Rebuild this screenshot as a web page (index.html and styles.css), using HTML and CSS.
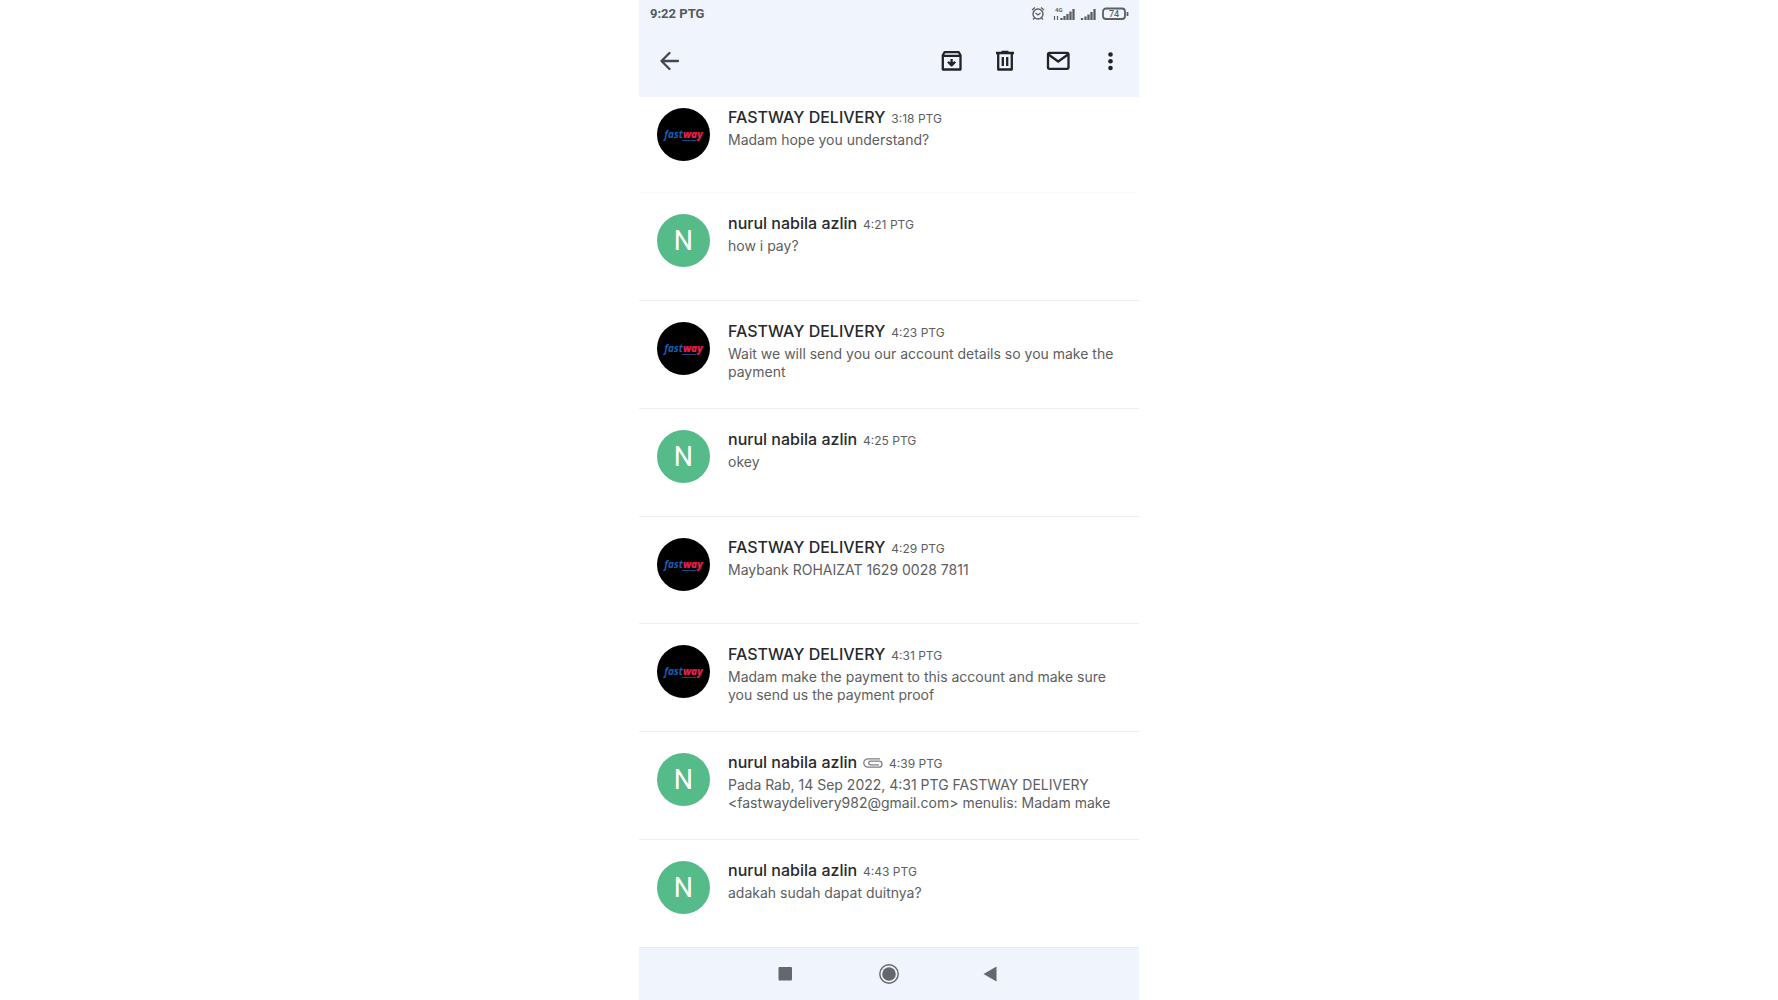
FILE: index.html
```
<!DOCTYPE html>
<html lang="ms">
<head>
<meta charset="utf-8">
<title>FASTWAY DELIVERY</title>
<meta name="viewport" content="width=device-width, initial-scale=1">
<link rel="stylesheet" href="styles.css">
</head>
<body>
<div class="phone">
  <header class="top">
    <div class="status">
      <span class="clock">9:22 PTG</span>
      <svg class="status-icons" viewBox="0 0 98 16" width="98" height="16" fill="none" stroke="#5b5f64" aria-hidden="true">
        <circle cx="7" cy="8" r="5" stroke-width="1.400"/>
        <path d="M1 4L4 1.500M13 4L10 1.500M4.500 7L7 9L9.500 7M3.500 12L2 13.500M10.500 12L12 13.500" stroke-width="1.300"/>
        <text class="tiny" x="24" y="6">4G</text>
        <path d="M23.500 10v4M26.500 10v4" stroke-width="1.200"/>
        <path d="M30.500 12v2M33.500 10v4M36.500 8v6M39.500 5.500v8.500M42.500 3v11M51 12v2M54.500 10.500v3.500M57.500 8.500v5.500M60.500 6v8M63.500 3v11" stroke-width="2.300"/>
        <rect x="72" y="2.500" width="22" height="10.500" rx="3" stroke-width="1.800"/>
        <path d="M96.500 6v4" stroke-width="1.800"/>
        <text class="charge" x="83" y="11">74</text>
      </svg>
    </div>
    <div class="bar">
      <button class="icon" type="button" aria-label="Back">
        <svg viewBox="0 0 24 24" fill="none" stroke="#44474d" stroke-width="2.300" stroke-linecap="round" stroke-linejoin="round"><path d="M20 12H4.500M11.500 4L3.500 12l8 8"/></svg>
      </button>
      <div class="actions">
        <button class="icon" type="button" aria-label="Archive">
          <svg viewBox="0 0 24 24" fill="none" stroke="#202328" stroke-width="2.300" stroke-linejoin="round"><path d="M2.800 6.200L4.500 3.200H18.800L20.500 6.200V20.500H2.800zM2.800 6.800H20.500M11.600 10v6M8 12.800l3.600 3.600L15.200 12.800"/></svg>
        </button>
        <button class="icon" type="button" aria-label="Delete">
          <svg viewBox="0 0 24 24" fill="none" stroke="#202328" stroke-width="2.300" stroke-linejoin="round"><path d="M3 4H21M8.500 3H15.500M5.200 4.500V20.500H18.800V4.500M9.800 8v9M14.200 8v9"/></svg>
        </button>
        <button class="icon" type="button" aria-label="Mark as unread">
          <svg viewBox="0 0 24 24" fill="none" stroke="#202328" stroke-width="2.300"><rect x="2" y="3.800" width="20.500" height="16" rx="1.500"/><path d="M2.500 5.500L12.200 12.500L22 5.500"/></svg>
        </button>
        <button class="icon" type="button" aria-label="More">
          <svg viewBox="0 0 24 24" fill="#202328"><circle cx="11.500" cy="5.500" r="2.300"/><circle cx="11.500" cy="12.300" r="2.300"/><circle cx="11.500" cy="19" r="2.300"/></svg>
        </button>
      </div>
    </div>
  </header>
  <main class="thread">
    <article class="mail">
      <span class="avatar logo"><span class="wordmark">fast<b>way</b></span></span>
      <div class="text"><h2 class="head"><span class="name">FASTWAY DELIVERY</span><time>3:18 PTG</time></h2><p>Madam hope you understand?</p></div>
    </article>
    <article class="mail">
      <span class="avatar letter">N</span>
      <div class="text"><h2 class="head"><span class="name">nurul nabila azlin</span><time>4:21 PTG</time></h2><p>how i pay?</p></div>
    </article>
    <article class="mail">
      <span class="avatar logo"><span class="wordmark">fast<b>way</b></span></span>
      <div class="text"><h2 class="head"><span class="name">FASTWAY DELIVERY</span><time>4:23 PTG</time></h2><p>Wait we will send you our account details so you make the payment</p></div>
    </article>
    <article class="mail">
      <span class="avatar letter">N</span>
      <div class="text"><h2 class="head"><span class="name">nurul nabila azlin</span><time>4:25 PTG</time></h2><p>okey</p></div>
    </article>
    <article class="mail">
      <span class="avatar logo"><span class="wordmark">fast<b>way</b></span></span>
      <div class="text"><h2 class="head"><span class="name">FASTWAY DELIVERY</span><time>4:29 PTG</time></h2><p>Maybank ROHAIZAT 1629 0028 7811</p></div>
    </article>
    <article class="mail">
      <span class="avatar logo"><span class="wordmark">fast<b>way</b></span></span>
      <div class="text"><h2 class="head"><span class="name">FASTWAY DELIVERY</span><time>4:31 PTG</time></h2><p>Madam make the payment to this account and make sure you send us the payment proof</p></div>
    </article>
    <article class="mail">
      <span class="avatar letter">N</span>
      <div class="text"><h2 class="head"><span class="name">nurul nabila azlin</span><svg class="clip" viewBox="0 0 20 10" width="20" height="10" fill="none" stroke="#7c7f83" stroke-width="1.300" role="img" aria-label="Attachment"><path d="M16 6.800H7.500a1.800 1.800 0 0 1 0-3.600H16a3 3 0 0 1 0 6H5A4.200 4.200 0 0 1 5 .8H17"/></svg><time>4:39 PTG</time></h2><p>Pada Rab, 14 Sep 2022, 4:31 PTG FASTWAY DELIVERY &lt;fastwaydelivery982@gmail.com&gt; menulis: Madam make</p></div>
    </article>
    <article class="mail">
      <span class="avatar letter">N</span>
      <div class="text"><h2 class="head"><span class="name">nurul nabila azlin</span><time>4:43 PTG</time></h2><p>adakah sudah dapat duitnya?</p></div>
    </article>
  </main>
  <nav class="system">
    <button class="icon" type="button" aria-label="Recent apps"><svg viewBox="0 0 24 24" fill="#64676b"><rect x="3.500" y="5" width="13.500" height="13.500" rx="1"/></svg></button>
    <button class="icon" type="button" aria-label="Home"><svg viewBox="0 0 24 24"><circle cx="12" cy="12" r="9.200" fill="none" stroke="#64676b" stroke-width="1.400"/><circle cx="12" cy="12" r="6.800" fill="#64676b"/></svg></button>
    <button class="icon" type="button" aria-label="Back"><svg viewBox="0 0 24 24" fill="#64676b"><path d="M4.500 12L17.500 4.500V19.500z"/></svg></button>
  </nav>
</div>
</body>
</html>
```
FILE: styles.css
```
* { box-sizing: border-box; }

body {
  margin: 0;
  background: #fff;
  font-family: Inter, Roboto, "Liberation Sans", sans-serif;
  color: #5c5e61;
}

.phone {
  display: flex;
  flex-direction: column;
  width: 100%;
  max-width: 500px;
  min-height: 100vh;
  margin: 0 auto;
}

.top {
  padding: 4px 10px 24px;
  background: #f0f5fd;
}

.status {
  display: flex;
  justify-content: space-between;
  align-items: center;
  height: 19px;
}

.clock { padding-left: 1px; font: 700 13px/19px Roboto, sans-serif; color: #55585d; }
.status-icons { display: block; }
.tiny { font: 700 6px Roboto, sans-serif; fill: #606469; stroke: none; }
.charge { font: 500 9px Roboto, sans-serif; fill: #606469; stroke: none; text-anchor: middle; }

.bar {
  display: flex;
  justify-content: space-between;
  align-items: center;
  padding: 26px 6px 0 9px;
}

.actions { display: flex; gap: 29px; }

.icon {
  display: block;
  width: 24px;
  height: 24px;
  padding: 0;
  border: 0;
  background: none;
}
.icon svg { display: block; width: 100%; height: 100%; }

.thread {
  display: grid;
  flex: 1;
  grid-template-rows: auto;
  grid-auto-rows: 1fr;
}

.mail {
  display: flex;
  align-items: flex-start;
  gap: 18px;
  padding: 20px 20px 16px 18px;
  border-top: 1px solid #efefef;
}
.mail:first-child { padding: 9px 20px 31px 18px; border-color: transparent; }
.mail:nth-child(2) { border-color: #fafafa; }

.avatar {
  flex: none;
  width: 53px;
  height: 53px;
  margin-top: 1px;
  border-radius: 50%;
  text-align: center;
}
.letter {
  background: #54bb89;
  color: #fff;
  font: 400 27px/55px Roboto, sans-serif;
}
.logo {
  display: flex;
  justify-content: center;
  align-items: center;
  background: #000;
}
.wordmark {
  padding-bottom: 1px;
  background: linear-gradient(#174a85, #174a85) 18px 100% / 14px 1px no-repeat;
  color: #1460b4;
  font: italic 700 10px/12px "Open Sans", sans-serif;
}
.wordmark b { color: #e81e4e; }

.head {
  display: flex;
  align-items: baseline;
  gap: 6px;
  margin: 0 0 2px;
  font-size: 16px;
  line-height: 20px;
  font-weight: 500;
}
.name { color: #27292c; }
.head time { font-size: 12px; font-weight: 400; }
.clip { align-self: center; }
.text p { margin: 0; font-size: 14px; line-height: 18px; }

.system {
  display: flex;
  justify-content: center;
  align-items: center;
  gap: 78px;
  height: 53px;
  border-top: 1px solid #e8ebf1;
  background: #f0f5fd;
}
```
